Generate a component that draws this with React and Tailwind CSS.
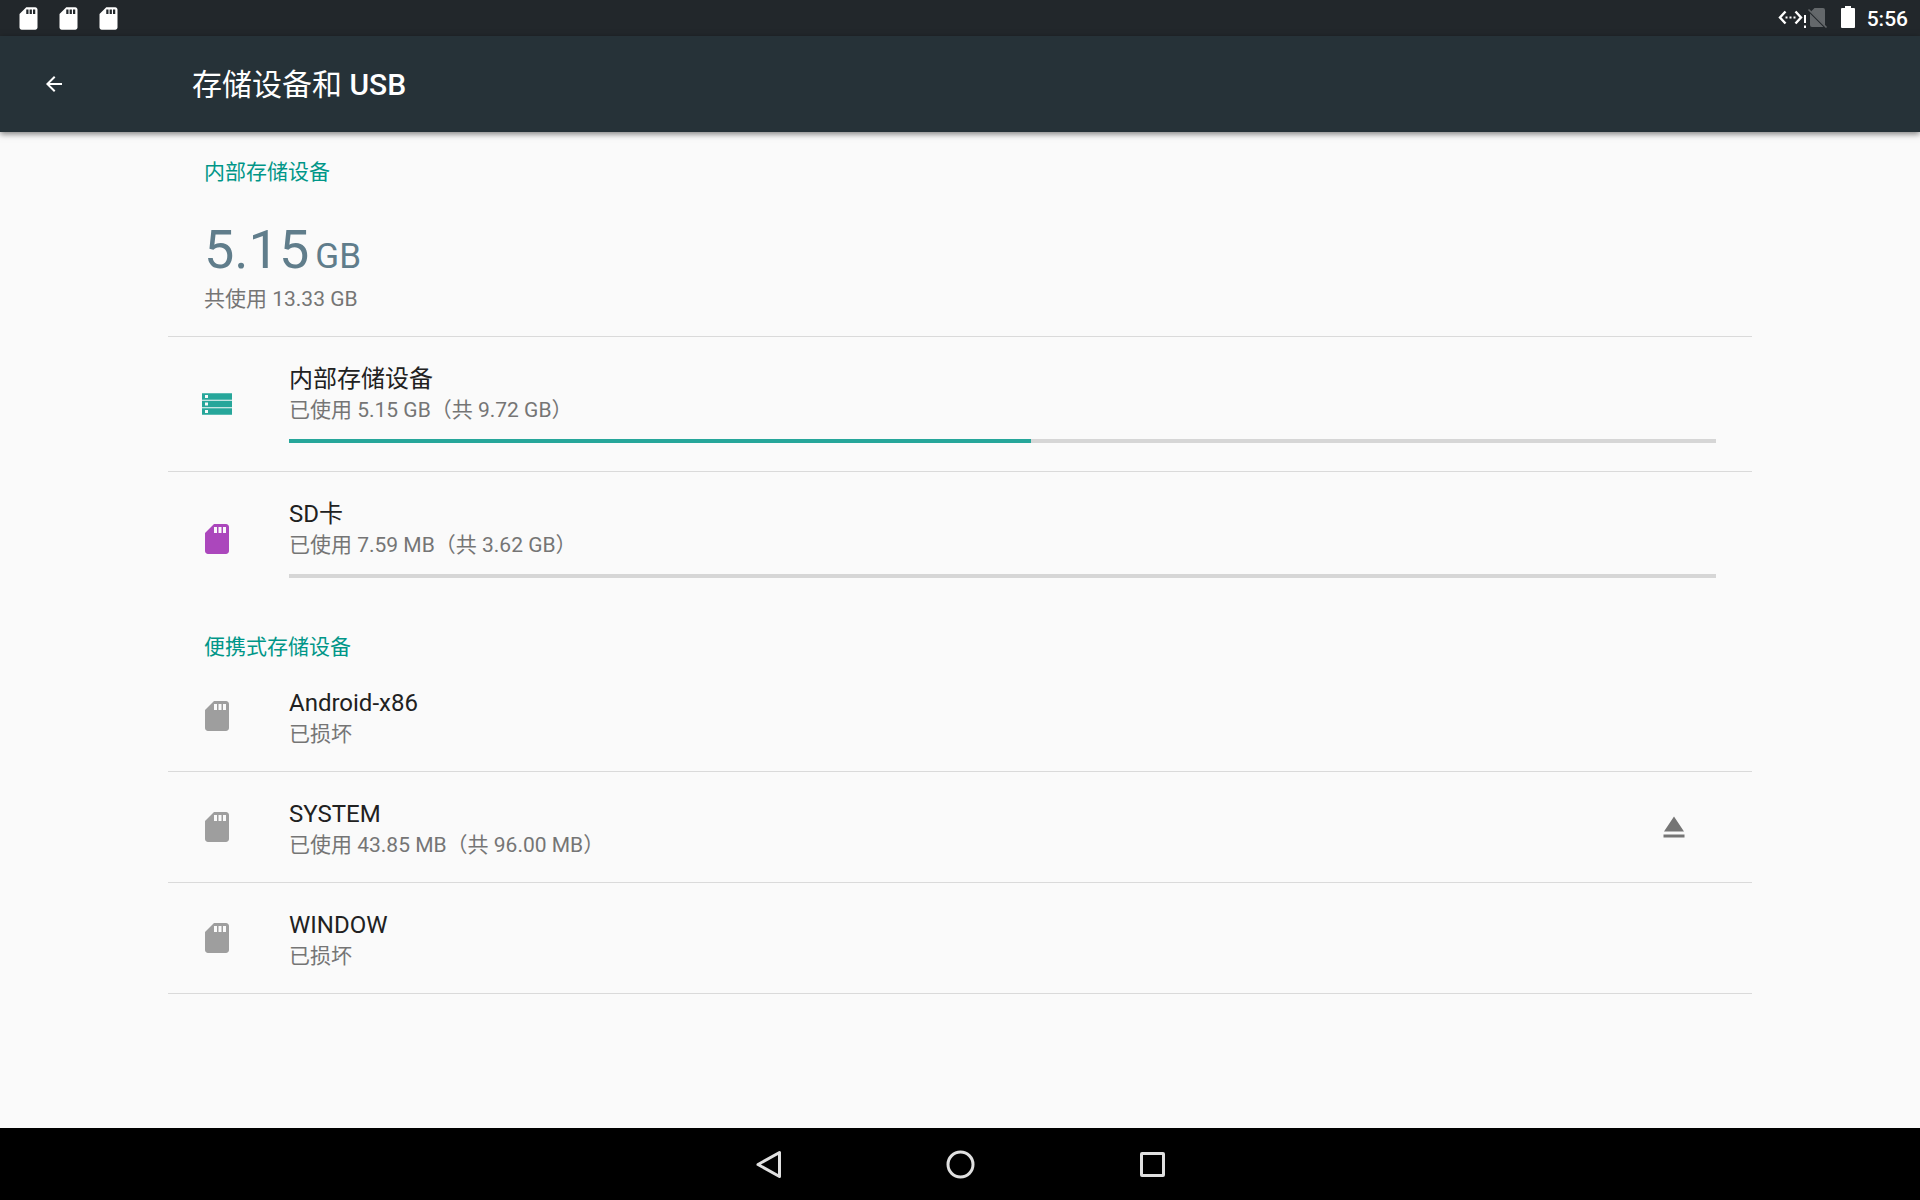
const cx = (...names) => names.filter(Boolean).join(" ");

function SdIcon({ className }) {
  return (
    <svg viewBox="0 0 24 24" fill="currentColor" aria-hidden="true" className={className}>
      <path d="M18 2h-8L4.02 8 4 20c0 1.1.9 2 2 2h12c1.1 0 2-.9 2-2V4c0-1.100-.9-2-2-2zm-6 6h-2V4h2v4zm3 0h-2V4h2v4zm3 0h-2V4h2v4z" />
    </svg>
  );
}

function StorageIcon({ className }) {
  return (
    <svg viewBox="0 0 36 36" fill="currentColor" fillRule="evenodd" aria-hidden="true" className={className}>
      <path d="M3 7.300h30v6.500H3zM6 9h3v3H6z" />
      <path d="M3 14.800h30v6.400H3zM6 16.500h3v3H6z" />
      <path d="M3 22.200h30v6.500H3zM6 24h3v3H6z" />
    </svg>
  );
}

function VolumeRow({ icon, title, detail, percent, divider = true, onEject }) {
  const hasBar = percent !== undefined;
  return (
    <li className={cx("flex items-center", divider && "border-b border-[#dadada]")}>
      <button
        type="button"
        className={cx(
          "flex min-w-0 flex-1 items-center gap-[54px] pt-[26px] pl-[31px] pr-9 text-left",
          hasBar ? "pb-7" : "pb-[22px]"
        )}
      >
        <span className={cx("shrink-0", hasBar ? "pt-0.5" : "pb-1")}>{icon}</span>
        <span className="block min-w-0 flex-1">
          <span className="block text-2xl leading-8 text-[#212121]">{title}</span>
          <span className="block text-[21px] leading-[30px] text-[#757575]">{detail}</span>
          {hasBar && (
            <span
              role="progressbar"
              aria-label={title}
              aria-valuenow={percent}
              aria-valuemin={0}
              aria-valuemax={100}
              className="mt-3.5 block h-1 bg-[#d6d6d6]"
            >
              <span className="block h-full bg-[#26a69a]" style={{ width: `${percent}%` }} />
            </span>
          )}
        </span>
      </button>
      {onEject && (
        <button type="button" aria-label="弹出" onClick={onEject} className="mr-[60px] text-[#757575]">
          <svg viewBox="0 0 24 24" fill="currentColor" aria-hidden="true" className="size-9">
            <path d="M5 17h14v2H5zM12 5L5.330 15h13.340z" />
          </svg>
        </button>
      )}
    </li>
  );
}

function StatusBar() {
  return (
    <div className="flex h-9 items-center justify-between bg-[#22272b] pl-[15px] pr-3 text-white">
      <div className="flex gap-[13px]">
        <SdIcon className="size-[27px]" />
        <SdIcon className="size-[27px]" />
        <SdIcon className="size-[27px]" />
      </div>
      <div className="flex items-center">
        <svg viewBox="0 0 50 36" aria-hidden="true" className="h-9 w-[50px]">
          <path d="M7.500 11.500L2 17.500l5.500 6M17.500 11.500l5.500 6-5.500 6" fill="none" stroke="#fff" strokeWidth="2.400" />
          <path d="M7.500 16.500h2v2h-2zM11.500 16.500h2v2h-2zM15.500 16.500h2v2h-2zM26 15h2v8h-2zM26 25.500h2v2.500h-2z" fill="#fff" />
          <path d="M36.500 8h8.500q2 0 2 2v15.500L33 11.500zM32 13.500L45.500 27H34q-2 0-2-2z" fill="#64686b" />
          <path d="M30.500 9.500L48.500 27.500" stroke="#64686b" strokeWidth="1.600" />
        </svg>
        <svg viewBox="0 0 14 22" aria-hidden="true" className="ml-[13px] mb-0.5 h-[22px] w-3.5">
          <path d="M4 0h6v2h3q1 0 1 1v18q0 1-1 1H1q-1 0-1-1V3q0-1 1-1h3z" fill="#fff" />
        </svg>
        <time className="ml-3 pt-0.5 text-[21px] leading-8 font-medium">5:56</time>
      </div>
    </div>
  );
}

export default function App() {
  return (
    <div lang="zh-CN" className="flex min-h-screen flex-col bg-[#fafafa] font-['Roboto','Noto_Sans_CJK_SC',sans-serif]">
      <StatusBar />
      <header className="flex h-24 items-center bg-[#263238] text-white shadow-[0_2px_6px_rgba(0,0,0,0.5)]">
        <button type="button" aria-label="返回" className="ml-[42px]">
          <svg viewBox="0 0 24 24" fill="currentColor" aria-hidden="true" className="size-6">
            <path d="M20 11H7.830l5.590-5.590L12 4l-8 8 8 8 1.410-1.410L7.830 13H20v-2z" />
          </svg>
        </button>
        <h1 className="ml-[126px] pt-0.5 text-3xl leading-9">
          存储设备和 <span className="font-medium">USB</span>
        </h1>
      </header>

      <main className="mx-[168px] flex-1 pt-[26px]">
        <section>
          <h2 className="pl-9 text-[21px] leading-7 text-[#009688]">内部存储设备</h2>
          <div className="border-b border-[#dadada] pt-[30px] pb-[22px] pl-9">
            <p className="flex items-baseline gap-1.5 text-[#607d8b]">
              <span className="text-[54px] leading-[68px]">5.15</span>
              <span className="text-[35px] leading-9">GB</span>
            </p>
            <p className="text-[21px] leading-[30px] text-[#757575]">共使用 13.33 GB</p>
          </div>
          <ul>
            <VolumeRow
              icon={<StorageIcon className="size-9 text-[#26a69a]" />}
              title="内部存储设备"
              detail="已使用 5.15 GB（共 9.72 GB）"
              percent={52}
            />
            <VolumeRow
              icon={<SdIcon className="size-9 text-[#ab47bc]" />}
              title="SD卡"
              detail="已使用 7.59 MB（共 3.62 GB）"
              percent={0}
              divider={false}
            />
          </ul>
        </section>

        <section className="pt-[27px]">
          <h2 className="pl-9 text-[21px] leading-7 text-[#009688]">便携式存储设备</h2>
          <ul>
            <VolumeRow icon={<SdIcon className="size-9 text-[#9e9e9e]" />} title="Android-x86" detail="已损坏" />
            <VolumeRow
              icon={<SdIcon className="size-9 text-[#9e9e9e]" />}
              title="SYSTEM"
              detail="已使用 43.85 MB（共 96.00 MB）"
              onEject={() => {}}
            />
            <VolumeRow icon={<SdIcon className="size-9 text-[#9e9e9e]" />} title="WINDOW" detail="已损坏" />
          </ul>
        </section>
      </main>

      <nav className="flex h-[72px] items-center justify-center gap-36 bg-black">
        <button type="button" aria-label="返回">
          <svg viewBox="0 0 48 48" aria-hidden="true" className="size-12">
            <path d="M14 24.500L35.500 12.500v24z" fill="none" stroke="#e0e0e0" strokeWidth="3" strokeLinejoin="round" />
          </svg>
        </button>
        <button type="button" aria-label="主屏幕">
          <svg viewBox="0 0 48 48" aria-hidden="true" className="size-12">
            <circle cx="24.500" cy="24.500" r="12.500" fill="none" stroke="#e0e0e0" strokeWidth="3" />
          </svg>
        </button>
        <button type="button" aria-label="最近任务">
          <svg viewBox="0 0 48 48" aria-hidden="true" className="size-12">
            <rect x="13.500" y="13.500" width="22" height="22" rx="0.500" fill="none" stroke="#e0e0e0" strokeWidth="3" strokeLinejoin="round" />
          </svg>
        </button>
      </nav>
    </div>
  );
}
